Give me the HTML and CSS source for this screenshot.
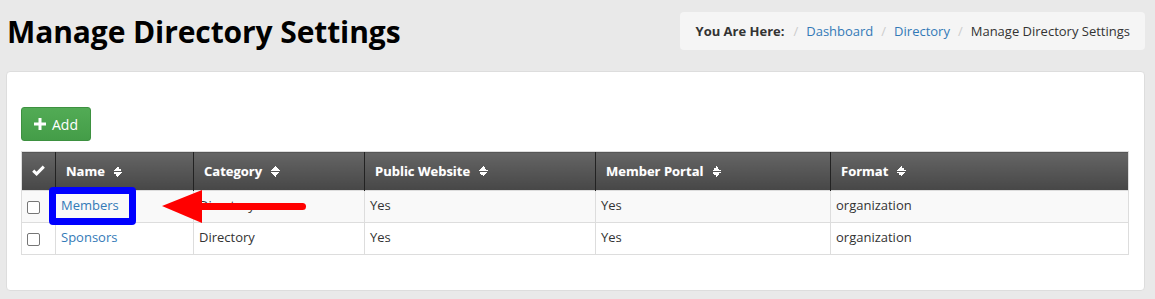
FILE: index.html
```html
<!DOCTYPE html>
<html lang="en">
<head>
  <meta charset="UTF-8" />
  <title>Manage Directory Settings</title>
  <link rel="stylesheet" href="styles.css">
</head>
<body>
  <div class="page-head">
    <h1>Manage Directory Settings</h1>
    <ol class="breadcrumb">
      <li class="here">You Are Here:</li>
      <li><a href="#">Dashboard</a></li>
      <li><a href="#">Directory</a></li>
      <li class="active">Manage Directory Settings</li>
    </ol>
  </div>

  <div class="panel">
    <button class="btn-add">
      <svg width="12" height="12" viewBox="0 0 12 12"><path d="M4.5 0h3v4.5H12v3H7.5V12h-3V7.5H0v-3h4.5z" fill="#fff"/></svg>
      Add
    </button>

    <table class="grid">
      <thead>
        <tr>
          <th class="col-check">
            <svg width="13" height="11" viewBox="0 0 13 11"><path d="M1.2 5.6l3.4 3.3L11.8 1.6" fill="none" stroke="#fff" stroke-width="3"/></svg>
          </th>
          <th class="col-name">Name <span class="sort"></span></th>
          <th class="col-cat">Category <span class="sort"></span></th>
          <th class="col-pub">Public Website <span class="sort"></span></th>
          <th class="col-mem">Member Portal <span class="sort"></span></th>
          <th>Format <span class="sort"></span></th>
        </tr>
      </thead>
      <tbody>
        <tr>
          <td class="col-check"><span class="box"></span></td>
          <td class="name-cell"><a href="#">Members</a><span class="highlight"></span><span class="arrow"></span></td>
          <td>Directory</td>
          <td>Yes</td>
          <td>Yes</td>
          <td>organization</td>
        </tr>
        <tr>
          <td class="col-check"><span class="box"></span></td>
          <td><a href="#">Sponsors</a></td>
          <td>Directory</td>
          <td>Yes</td>
          <td>Yes</td>
          <td>organization</td>
        </tr>
      </tbody>
    </table>
  </div>
</body>
</html>
```

FILE: styles.css
```css
body {
  margin: 0;
  padding: 0 10px 0 6px;
  background: #e9e9e9;
  font-family: 'Open Sans', sans-serif;
  font-size: 13px;
  color: #333;
}
.page-head {
  display: flex;
  justify-content: space-between;
  align-items: flex-start;
  height: 71px;
}
h1 {
  margin: 11px 0 0 1px;
  font-size: 30px;
  font-weight: 700;
  color: #000;
  letter-spacing: -0.1px;
}
.breadcrumb {
  list-style: none;
  margin: 12px 0 0;
  padding: 0 15px 0 16px;
  height: 38px;
  display: flex;
  align-items: center;
  background: #f5f5f5;
  border-radius: 4px;
  font-size: 13px;
}
.breadcrumb li + li::before {
  content: "/";
  color: #ccc;
  padding: 0 8px;
}
.breadcrumb .here {
  font-weight: 700;
  color: #333;
}
.breadcrumb .here + li::before {
  padding-left: 9px;
}
.breadcrumb a {
  color: #337ab7;
  text-decoration: none;
}
.breadcrumb .active {
  color: #333;
}
.panel {
  background: #fff;
  border: 1px solid #ddd;
  border-radius: 4px;
  padding: 35px 15px 36px 14px;
  height: 147px;
}
.btn-add {
  display: flex;
  align-items: center;
  gap: 6px;
  height: 34px;
  padding: 0 12px 0 12px;
  border: 1px solid #3d9140;
  border-radius: 3px;
  background: linear-gradient(#52ab55, #449d48);
  color: #fff;
  font-family: inherit;
  font-size: 14px;
}
.grid {
  margin-top: 10px;
  width: 1108px;
  table-layout: fixed;
  border-collapse: collapse;
  border: 1px solid #ddd;
}
.grid th, .grid td {
  box-sizing: border-box;
}
.grid th {
  height: 39px;
  padding: 0 10px;
  text-align: left;
  font-size: 13px;
  font-weight: 700;
  color: #fff;
  background: linear-gradient(#656565, #474747);
  border-left: 1px solid #222;
  border-top: 1px solid #ddd;
  text-shadow: 0 0 1px rgba(255, 255, 255, 0.3);
}
.grid th:first-child {
  border-left: none;
}
.grid td {
  height: 32px;
  padding: 0 5px 3px;
  border: 1px solid #ddd;
  color: #333;
}
.grid tbody tr:nth-child(odd) td {
  background: #f9f9f9;
}
.grid td a {
  color: #337ab7;
  text-decoration: none;
}
.grid .col-check {
  width: 34px;
  text-align: center;
  padding: 0;
}
.grid td.col-check {
  text-align: left;
  padding: 0 0 1px 5px;
}
.col-name { width: 138px; }
.col-cat { width: 171px; }
.col-pub { width: 231px; }
.col-mem { width: 235px; }
.sort {
  display: inline-block;
  width: 9px;
  height: 11px;
  margin-left: 5px;
  vertical-align: -1px;
  background:
    linear-gradient(to bottom right, transparent 50%, #fff 50%) 0 0 / 5px 5px no-repeat,
    linear-gradient(to bottom left, transparent 50%, #fff 50%) 4px 0 / 5px 5px no-repeat,
    linear-gradient(to top right, transparent 50%, #fff 50%) 0 6px / 5px 5px no-repeat,
    linear-gradient(to top left, transparent 50%, #fff 50%) 4px 6px / 5px 5px no-repeat;
}
.box {
  display: inline-block;
  width: 11px;
  height: 11px;
  border: 1px solid #767676;
  border-radius: 2px;
  background: #fff;
  vertical-align: middle;
}
.name-cell {
  position: relative;
}
.highlight {
  position: absolute;
  left: -7px;
  top: -4px;
  width: 73px;
  height: 24px;
  border: 7px solid #0000ff;
  border-radius: 4px;
}
.arrow {
  position: absolute;
  left: 146px;
  top: 12px;
  width: 104px;
  height: 7px;
  background: #ff0000;
  border-radius: 0 4px 4px 0;
}
.arrow::before {
  content: "";
  position: absolute;
  left: -40px;
  top: -13px;
  border-top: 16px solid transparent;
  border-bottom: 17px solid transparent;
  border-right: 40px solid #ff0000;
}
```
